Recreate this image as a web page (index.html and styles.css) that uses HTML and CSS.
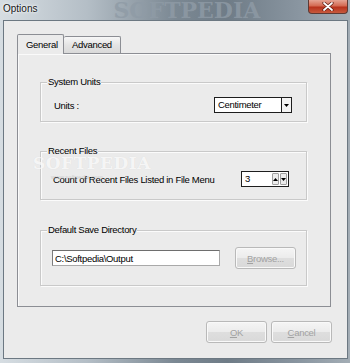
FILE: index.html
```html
<!DOCTYPE html>
<html lang="en">
<head>
  <meta charset="UTF-8">
  <title>Options</title>
  <link rel="stylesheet" href="styles.css">
</head>
<body>
  <div class="window">
    <!-- Title bar -->
    <div class="titlebar">
      <span class="title">Options</span>
      <span class="brand">SOFTPEDIA</span>
      <button class="close" title="Close">
        <svg width="12" height="9" viewBox="0 0 12 9">
          <path d="M2 1 L10 8 M10 1 L2 8" stroke="#5a1a10" stroke-width="3.2" stroke-linecap="round"/>
          <path d="M2 1 L10 8 M10 1 L2 8" stroke="#fff" stroke-width="1.8" stroke-linecap="round"/>
        </svg>
      </button>
    </div>

    <div class="client">
      <div class="tabs">
        <div class="tab active">General</div>
        <div class="tab">Advanced</div>
      </div>

      <div class="panel">
        <fieldset class="group units">
          <legend>System Units</legend>
          <div class="row">
            <label>Units :</label>
            <div class="combo">
              <span class="value">Centimeter</span>
              <span class="drop">
                <svg width="5" height="3" viewBox="0 0 5 3"><path d="M0 0 H5 L2.5 3 Z" fill="#000"/></svg>
              </span>
            </div>
          </div>
        </fieldset>

        <fieldset class="group recent">
          <legend>Recent Files</legend>
          <span class="stamp">SOFTPEDIA<small>www.softpedia.com</small></span>
          <div class="row">
            <label>Count of Recent Files Listed in File Menu</label>
            <div class="spinner">
              <span class="value">3</span>
              <span class="arrows">
                <span class="arrow"><svg width="5" height="3" viewBox="0 0 5 3"><path d="M0 3 H5 L2.5 0 Z" fill="#000"/></svg></span>
                <span class="arrow"><svg width="5" height="3" viewBox="0 0 5 3"><path d="M0 0 H5 L2.5 3 Z" fill="#000"/></svg></span>
              </span>
            </div>
          </div>
        </fieldset>

        <fieldset class="group folder">
          <legend>Default Save Directory</legend>
          <div class="row">
            <input class="path" type="text" value="C:\Softpedia\Output">
            <button class="btn" disabled><u>B</u>rowse...</button>
          </div>
        </fieldset>
      </div>

      <div class="actions">
        <button class="btn" disabled><u>O</u>K</button>
        <button class="btn" disabled><u>C</u>ancel</button>
      </div>
    </div>
  </div>
</body>
</html>
```

FILE: styles.css
```css
* {
  box-sizing: border-box;
}
body {
  margin: 0;
  width: 350px;
  height: 363px;
  overflow: hidden;
  font-family: "Liberation Sans", Arial, sans-serif;
  font-size: 9.5px;
  letter-spacing: -0.3px;
  color: #000;
  background: linear-gradient(90deg, #d6dde2 0%, #b4bec6 25%, #7b8893 50%, #6f7c87 65%, #8995a0 85%, #a3adb5 100%);
}
.window {
  height: 363px;
  display: flex;
  flex-direction: column;
}

/* Title bar */
.titlebar {
  height: 20px;
  display: flex;
  align-items: flex-start;
  overflow: hidden;
}
.title {
  font-size: 10px;
  letter-spacing: 0;
  line-height: 17px;
  padding-left: 3px;
  color: #151515;
  text-shadow: 0 0 4px #fff, 0 0 2px #fff;
}
.brand {
  margin-left: 76px;
  font: bold 22px "DejaVu Serif", serif;
  letter-spacing: 0;
  line-height: 20px;
  color: #8f9ba6;
  opacity: 0.8;
}
.close {
  margin-left: auto;
  margin-right: 2px;
  width: 40px;
  height: 14px;
  padding: 0;
  border: 1px solid #5e3a34;
  border-top: none;
  border-radius: 0 0 4px 4px;
  background: linear-gradient(#e5a494 0%, #d46a52 45%, #b8321c 55%, #c75a3e 100%);
  display: flex;
  align-items: center;
  justify-content: center;
}

/* Dialog body */
.client {
  flex: 1;
  margin: 0 2px 4px 3px;
  background: #ebebeb;
  border: 1px solid #6c7882;
  padding: 13px 16px 0 13px;
}
.tabs {
  display: flex;
  align-items: flex-end;
  height: 19px;
}
.tab {
  height: 17px;
  padding: 0 8px;
  line-height: 16px;
  border: 1px solid #8c8e94;
  border-bottom: none;
  border-radius: 2px 2px 0 0;
  background: linear-gradient(#f7f7f7, #e4e4e4 50%, #d9d9d9);
}
.tab + .tab {
  border-left: none;
}
.tab.active {
  position: relative;
  z-index: 1;
  height: 20px;
  margin-bottom: -1px;
  width: 47px;
  line-height: 20px;
  background: #ebebeb;
}
.panel {
  height: 254px;
  border: 1px solid #8c8e94;
  box-shadow: inset 1px 1px 0 #fafafa;
  padding: 22px 23px 0 22px;
}

/* Group boxes */
.group {
  margin: 0;
  padding: 0;
  border: 1px solid #c9c9c9;
  box-shadow: inset 1px 1px 0 #fbfbfb, 1px 1px 0 #fbfbfb;
}
.group legend {
  margin-left: 6px;
  padding: 0 1px;
  line-height: 12px;
  background: #ebebeb;
}
.row {
  display: flex;
  align-items: center;
  justify-content: space-between;
}
.units .row {
  padding: 9px 14px 8px 13px;
}
.recent {
  position: relative;
  margin-top: 23px;
}
.recent .row {
  padding: 14px 17px 12px 12px;
}
.folder {
  margin-top: 24px;
}
.folder .row {
  padding: 11px 10px 16px 11px;
}

/* Controls */
.combo, .spinner {
  height: 16px;
  display: flex;
  background: #fff;
  border: 1px solid #1e1e1e;
}
.combo {
  width: 78px;
}
.value {
  flex: 1;
  padding-left: 3px;
  line-height: 14px;
}
.drop {
  width: 10px;
  border-left: 1px solid #1e1e1e;
  display: flex;
  align-items: center;
  justify-content: center;
  background: #f4f4f4;
}
.spinner {
  width: 48px;
}
.arrows {
  display: flex;
  padding: 1px;
  gap: 1px;
}
.arrow {
  width: 7px;
  display: flex;
  align-items: center;
  justify-content: center;
  background: #ececec;
  border: 1px solid #a0a0a0;
  border-radius: 1px;
}
.path {
  width: 168px;
  height: 16px;
  margin: 0;
  padding: 0 2px;
  font: inherit;
  letter-spacing: inherit;
  color: #000;
  background: #fff;
  border: 1px solid #a9a9a9;
  border-top-color: #6e6e6e;
  border-left-color: #7c7c7c;
  outline: none;
}
.btn {
  width: 61px;
  height: 22px;
  padding: 0;
  font: inherit;
  letter-spacing: inherit;
  color: #a2a2a2;
  border: 1px solid #b9b9b9;
  border-radius: 3px;
  background: linear-gradient(#f5f5f5, #ececec 48%, #dedede 52%, #d9d9d9);
  box-shadow: inset 0 0 0 1px #f9f9f9;
}
.btn u {
  text-decoration: underline;
}
.actions {
  display: flex;
  justify-content: flex-end;
  gap: 4px;
  margin: 14px -1px 0 0;
}

/* Faint watermark over the group box */
.stamp {
  position: absolute;
  left: -8px;
  top: -2px;
  font: bold 17px "DejaVu Serif", serif;
  line-height: 17px;
  letter-spacing: 0.5px;
  color: rgba(255, 255, 255, 0.75);
  text-shadow: 0 0 1px rgba(0, 0, 0, 0.08);
  pointer-events: none;
}
.stamp small {
  display: block;
  margin: 2px 0 0 18px;
  font: 6px "Liberation Sans", sans-serif;
  line-height: 7px;
  letter-spacing: 0;
  color: rgba(200, 200, 200, 0.5);
}
```
